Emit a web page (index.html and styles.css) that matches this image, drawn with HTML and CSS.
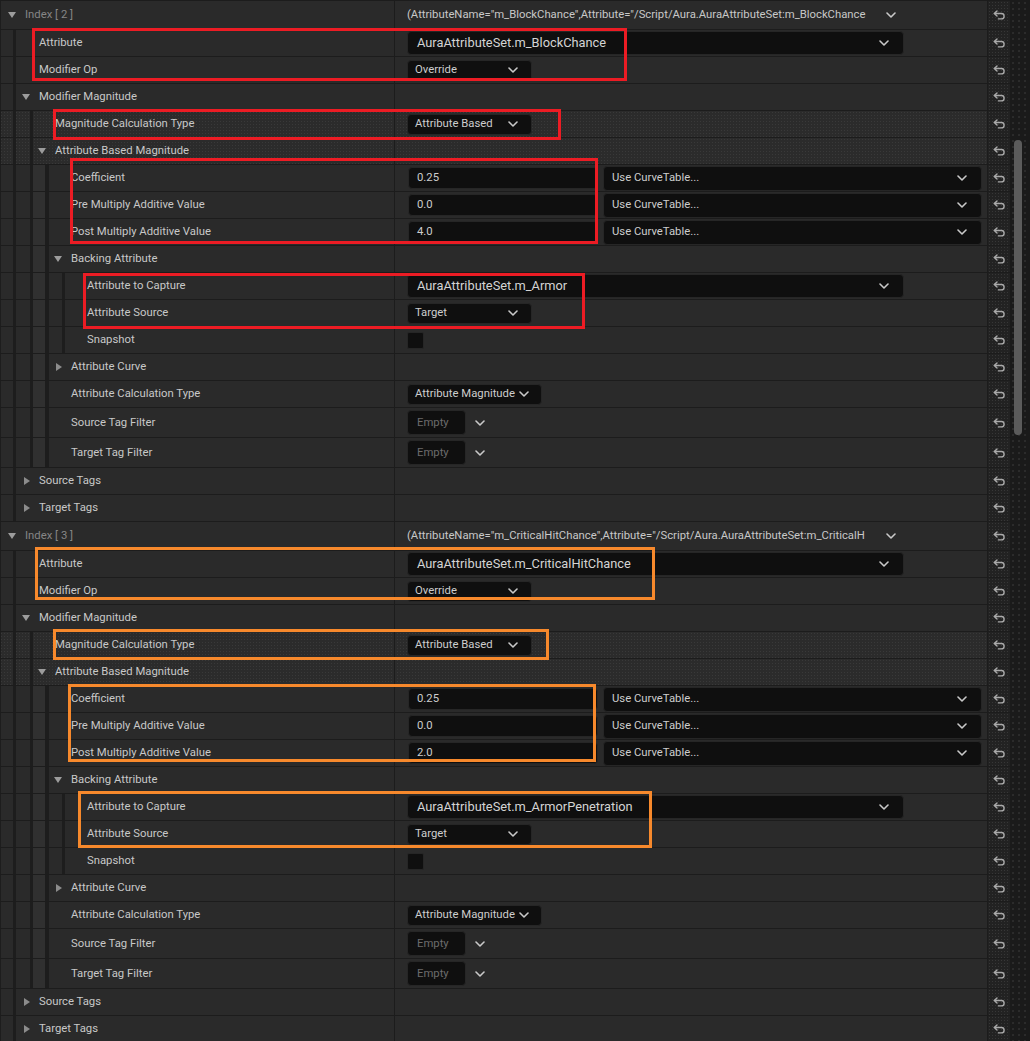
FILE: index.html
```html
<!DOCTYPE html>
<html lang="en">
<head>
<meta charset="utf-8">
<title>Details</title>
<link rel="stylesheet" href="styles.css">
</head>
<body>
<div class="page">
  <div class="list">

    <!-- ===== Index 2 ===== -->
    <div class="row idx">
      <div class="name d0 hdr"><span class="arw"><i class="tri-d"></i></span><span class="lbl dim">Index [ 2 ]</span></div>
      <div class="val"><span class="sum">(AttributeName="m_BlockChance",Attribute="/Script/Aura.AuraAttributeSet:m_BlockChance</span><svg class="chev" width="10" height="6" viewBox="0 0 10 6"><path d="M1 1L5 5L9 1"/></svg></div>
      <div class="rst"><svg width="13" height="10" viewBox="0 0 13 10"><path d="M4 .9L1.2 3.5L4 6.1M1.6 3.5H8.4A2.7 2.7 0 0 1 8.4 8.9H5.4"/></svg></div>
    </div>
    <div class="row">
      <div class="name d1"><span class="lbl">Attribute</span></div>
      <div class="val"><div class="box combo"><span>AuraAttributeSet.m_BlockChance</span><svg class="chev" width="10" height="6" viewBox="0 0 10 6"><path d="M1 1L5 5L9 1"/></svg></div></div>
      <div class="rst"><svg width="13" height="10" viewBox="0 0 13 10"><path d="M4 .9L1.2 3.5L4 6.1M1.6 3.5H8.4A2.7 2.7 0 0 1 8.4 8.9H5.4"/></svg></div>
    </div>
    <div class="row">
      <div class="name d1"><span class="lbl">Modifier Op</span></div>
      <div class="val"><div class="box dd"><span>Override</span><svg class="chev" width="10" height="6" viewBox="0 0 10 6"><path d="M1 1L5 5L9 1"/></svg></div></div>
      <div class="rst"><svg width="13" height="10" viewBox="0 0 13 10"><path d="M4 .9L1.2 3.5L4 6.1M1.6 3.5H8.4A2.7 2.7 0 0 1 8.4 8.9H5.4"/></svg></div>
    </div>
    <div class="row">
      <div class="name d1 hdr"><span class="arw"><i class="tri-d"></i></span><span class="lbl">Modifier Magnitude</span></div>
      <div class="val"></div>
      <div class="rst"><svg width="13" height="10" viewBox="0 0 13 10"><path d="M4 .9L1.2 3.5L4 6.1M1.6 3.5H8.4A2.7 2.7 0 0 1 8.4 8.9H5.4"/></svg></div>
    </div>
    <div class="row tex">
      <div class="name d2"><span class="lbl">Magnitude Calculation Type</span></div>
      <div class="val"><div class="box dd"><span>Attribute Based</span><svg class="chev" width="10" height="6" viewBox="0 0 10 6"><path d="M1 1L5 5L9 1"/></svg></div></div>
      <div class="rst"><svg width="13" height="10" viewBox="0 0 13 10"><path d="M4 .9L1.2 3.5L4 6.1M1.6 3.5H8.4A2.7 2.7 0 0 1 8.4 8.9H5.4"/></svg></div>
    </div>
    <div class="row tex">
      <div class="name d2 hdr"><span class="arw"><i class="tri-d"></i></span><span class="lbl">Attribute Based Magnitude</span></div>
      <div class="val"></div>
      <div class="rst"><svg width="13" height="10" viewBox="0 0 13 10"><path d="M4 .9L1.2 3.5L4 6.1M1.6 3.5H8.4A2.7 2.7 0 0 1 8.4 8.9H5.4"/></svg></div>
    </div>
    <div class="row">
      <div class="name d3"><span class="lbl">Coefficient</span></div>
      <div class="val"><div class="box num"><span>0.25</span></div><div class="box curve"><span>Use CurveTable...</span><svg class="chev" width="10" height="6" viewBox="0 0 10 6"><path d="M1 1L5 5L9 1"/></svg></div></div>
      <div class="rst"><svg width="13" height="10" viewBox="0 0 13 10"><path d="M4 .9L1.2 3.5L4 6.1M1.6 3.5H8.4A2.7 2.7 0 0 1 8.4 8.9H5.4"/></svg></div>
    </div>
    <div class="row">
      <div class="name d3"><span class="lbl">Pre Multiply Additive Value</span></div>
      <div class="val"><div class="box num"><span>0.0</span></div><div class="box curve"><span>Use CurveTable...</span><svg class="chev" width="10" height="6" viewBox="0 0 10 6"><path d="M1 1L5 5L9 1"/></svg></div></div>
      <div class="rst"><svg width="13" height="10" viewBox="0 0 13 10"><path d="M4 .9L1.2 3.5L4 6.1M1.6 3.5H8.4A2.7 2.7 0 0 1 8.4 8.9H5.4"/></svg></div>
    </div>
    <div class="row">
      <div class="name d3"><span class="lbl">Post Multiply Additive Value</span></div>
      <div class="val"><div class="box num"><span>4.0</span></div><div class="box curve"><span>Use CurveTable...</span><svg class="chev" width="10" height="6" viewBox="0 0 10 6"><path d="M1 1L5 5L9 1"/></svg></div></div>
      <div class="rst"><svg width="13" height="10" viewBox="0 0 13 10"><path d="M4 .9L1.2 3.5L4 6.1M1.6 3.5H8.4A2.7 2.7 0 0 1 8.4 8.9H5.4"/></svg></div>
    </div>
    <div class="row">
      <div class="name d3 hdr"><span class="arw"><i class="tri-d"></i></span><span class="lbl">Backing Attribute</span></div>
      <div class="val"></div>
      <div class="rst"><svg width="13" height="10" viewBox="0 0 13 10"><path d="M4 .9L1.2 3.5L4 6.1M1.6 3.5H8.4A2.7 2.7 0 0 1 8.4 8.9H5.4"/></svg></div>
    </div>
    <div class="row">
      <div class="name d4"><span class="lbl">Attribute to Capture</span></div>
      <div class="val"><div class="box combo"><span>AuraAttributeSet.m_Armor</span><svg class="chev" width="10" height="6" viewBox="0 0 10 6"><path d="M1 1L5 5L9 1"/></svg></div></div>
      <div class="rst"><svg width="13" height="10" viewBox="0 0 13 10"><path d="M4 .9L1.2 3.5L4 6.1M1.6 3.5H8.4A2.7 2.7 0 0 1 8.4 8.9H5.4"/></svg></div>
    </div>
    <div class="row">
      <div class="name d4"><span class="lbl">Attribute Source</span></div>
      <div class="val"><div class="box dd"><span>Target</span><svg class="chev" width="10" height="6" viewBox="0 0 10 6"><path d="M1 1L5 5L9 1"/></svg></div></div>
      <div class="rst"><svg width="13" height="10" viewBox="0 0 13 10"><path d="M4 .9L1.2 3.5L4 6.1M1.6 3.5H8.4A2.7 2.7 0 0 1 8.4 8.9H5.4"/></svg></div>
    </div>
    <div class="row">
      <div class="name d4"><span class="lbl">Snapshot</span></div>
      <div class="val"><div class="check"></div></div>
      <div class="rst"><svg width="13" height="10" viewBox="0 0 13 10"><path d="M4 .9L1.2 3.5L4 6.1M1.6 3.5H8.4A2.7 2.7 0 0 1 8.4 8.9H5.4"/></svg></div>
    </div>
    <div class="row">
      <div class="name d3 hdr"><span class="arw"><i class="tri-r"></i></span><span class="lbl">Attribute Curve</span></div>
      <div class="val"></div>
      <div class="rst"><svg width="13" height="10" viewBox="0 0 13 10"><path d="M4 .9L1.2 3.5L4 6.1M1.6 3.5H8.4A2.7 2.7 0 0 1 8.4 8.9H5.4"/></svg></div>
    </div>
    <div class="row">
      <div class="name d3"><span class="lbl">Attribute Calculation Type</span></div>
      <div class="val"><div class="box dd mag"><span>Attribute Magnitude</span><svg class="chev" width="10" height="6" viewBox="0 0 10 6"><path d="M1 1L5 5L9 1"/></svg></div></div>
      <div class="rst"><svg width="13" height="10" viewBox="0 0 13 10"><path d="M4 .9L1.2 3.5L4 6.1M1.6 3.5H8.4A2.7 2.7 0 0 1 8.4 8.9H5.4"/></svg></div>
    </div>
    <div class="row tall">
      <div class="name d3"><span class="lbl">Source Tag Filter</span></div>
      <div class="val"><div class="box empty"><span>Empty</span></div><svg class="chev ext" width="10" height="6" viewBox="0 0 10 6"><path d="M1 1L5 5L9 1"/></svg></div>
      <div class="rst"><svg width="13" height="10" viewBox="0 0 13 10"><path d="M4 .9L1.2 3.5L4 6.1M1.6 3.5H8.4A2.7 2.7 0 0 1 8.4 8.9H5.4"/></svg></div>
    </div>
    <div class="row tall">
      <div class="name d3"><span class="lbl">Target Tag Filter</span></div>
      <div class="val"><div class="box empty"><span>Empty</span></div><svg class="chev ext" width="10" height="6" viewBox="0 0 10 6"><path d="M1 1L5 5L9 1"/></svg></div>
      <div class="rst"><svg width="13" height="10" viewBox="0 0 13 10"><path d="M4 .9L1.2 3.5L4 6.1M1.6 3.5H8.4A2.7 2.7 0 0 1 8.4 8.9H5.4"/></svg></div>
    </div>
    <div class="row">
      <div class="name d1 hdr"><span class="arw"><i class="tri-r"></i></span><span class="lbl">Source Tags</span></div>
      <div class="val"></div>
      <div class="rst"><svg width="13" height="10" viewBox="0 0 13 10"><path d="M4 .9L1.2 3.5L4 6.1M1.6 3.5H8.4A2.7 2.7 0 0 1 8.4 8.9H5.4"/></svg></div>
    </div>
    <div class="row">
      <div class="name d1 hdr"><span class="arw"><i class="tri-r"></i></span><span class="lbl">Target Tags</span></div>
      <div class="val"></div>
      <div class="rst"><svg width="13" height="10" viewBox="0 0 13 10"><path d="M4 .9L1.2 3.5L4 6.1M1.6 3.5H8.4A2.7 2.7 0 0 1 8.4 8.9H5.4"/></svg></div>
    </div>

    <!-- ===== Index 3 ===== -->
    <div class="row idx">
      <div class="name d0 hdr"><span class="arw"><i class="tri-d"></i></span><span class="lbl dim">Index [ 3 ]</span></div>
      <div class="val"><span class="sum">(AttributeName="m_CriticalHitChance",Attribute="/Script/Aura.AuraAttributeSet:m_CriticalH</span><svg class="chev" width="10" height="6" viewBox="0 0 10 6"><path d="M1 1L5 5L9 1"/></svg></div>
      <div class="rst"><svg width="13" height="10" viewBox="0 0 13 10"><path d="M4 .9L1.2 3.5L4 6.1M1.6 3.5H8.4A2.7 2.7 0 0 1 8.4 8.9H5.4"/></svg></div>
    </div>
    <div class="row">
      <div class="name d1"><span class="lbl">Attribute</span></div>
      <div class="val"><div class="box combo"><span>AuraAttributeSet.m_CriticalHitChance</span><svg class="chev" width="10" height="6" viewBox="0 0 10 6"><path d="M1 1L5 5L9 1"/></svg></div></div>
      <div class="rst"><svg width="13" height="10" viewBox="0 0 13 10"><path d="M4 .9L1.2 3.5L4 6.1M1.6 3.5H8.4A2.7 2.7 0 0 1 8.4 8.9H5.4"/></svg></div>
    </div>
    <div class="row">
      <div class="name d1"><span class="lbl">Modifier Op</span></div>
      <div class="val"><div class="box dd"><span>Override</span><svg class="chev" width="10" height="6" viewBox="0 0 10 6"><path d="M1 1L5 5L9 1"/></svg></div></div>
      <div class="rst"><svg width="13" height="10" viewBox="0 0 13 10"><path d="M4 .9L1.2 3.5L4 6.1M1.6 3.5H8.4A2.7 2.7 0 0 1 8.4 8.9H5.4"/></svg></div>
    </div>
    <div class="row">
      <div class="name d1 hdr"><span class="arw"><i class="tri-d"></i></span><span class="lbl">Modifier Magnitude</span></div>
      <div class="val"></div>
      <div class="rst"><svg width="13" height="10" viewBox="0 0 13 10"><path d="M4 .9L1.2 3.5L4 6.1M1.6 3.5H8.4A2.7 2.7 0 0 1 8.4 8.9H5.4"/></svg></div>
    </div>
    <div class="row tex">
      <div class="name d2"><span class="lbl">Magnitude Calculation Type</span></div>
      <div class="val"><div class="box dd"><span>Attribute Based</span><svg class="chev" width="10" height="6" viewBox="0 0 10 6"><path d="M1 1L5 5L9 1"/></svg></div></div>
      <div class="rst"><svg width="13" height="10" viewBox="0 0 13 10"><path d="M4 .9L1.2 3.5L4 6.1M1.6 3.5H8.4A2.7 2.7 0 0 1 8.4 8.9H5.4"/></svg></div>
    </div>
    <div class="row tex">
      <div class="name d2 hdr"><span class="arw"><i class="tri-d"></i></span><span class="lbl">Attribute Based Magnitude</span></div>
      <div class="val"></div>
      <div class="rst"><svg width="13" height="10" viewBox="0 0 13 10"><path d="M4 .9L1.2 3.5L4 6.1M1.6 3.5H8.4A2.7 2.7 0 0 1 8.4 8.9H5.4"/></svg></div>
    </div>
    <div class="row">
      <div class="name d3"><span class="lbl">Coefficient</span></div>
      <div class="val"><div class="box num"><span>0.25</span></div><div class="box curve"><span>Use CurveTable...</span><svg class="chev" width="10" height="6" viewBox="0 0 10 6"><path d="M1 1L5 5L9 1"/></svg></div></div>
      <div class="rst"><svg width="13" height="10" viewBox="0 0 13 10"><path d="M4 .9L1.2 3.5L4 6.1M1.6 3.5H8.4A2.7 2.7 0 0 1 8.4 8.9H5.4"/></svg></div>
    </div>
    <div class="row">
      <div class="name d3"><span class="lbl">Pre Multiply Additive Value</span></div>
      <div class="val"><div class="box num"><span>0.0</span></div><div class="box curve"><span>Use CurveTable...</span><svg class="chev" width="10" height="6" viewBox="0 0 10 6"><path d="M1 1L5 5L9 1"/></svg></div></div>
      <div class="rst"><svg width="13" height="10" viewBox="0 0 13 10"><path d="M4 .9L1.2 3.5L4 6.1M1.6 3.5H8.4A2.7 2.7 0 0 1 8.4 8.9H5.4"/></svg></div>
    </div>
    <div class="row">
      <div class="name d3"><span class="lbl">Post Multiply Additive Value</span></div>
      <div class="val"><div class="box num"><span>2.0</span></div><div class="box curve"><span>Use CurveTable...</span><svg class="chev" width="10" height="6" viewBox="0 0 10 6"><path d="M1 1L5 5L9 1"/></svg></div></div>
      <div class="rst"><svg width="13" height="10" viewBox="0 0 13 10"><path d="M4 .9L1.2 3.5L4 6.1M1.6 3.5H8.4A2.7 2.7 0 0 1 8.4 8.9H5.4"/></svg></div>
    </div>
    <div class="row">
      <div class="name d3 hdr"><span class="arw"><i class="tri-d"></i></span><span class="lbl">Backing Attribute</span></div>
      <div class="val"></div>
      <div class="rst"><svg width="13" height="10" viewBox="0 0 13 10"><path d="M4 .9L1.2 3.5L4 6.1M1.6 3.5H8.4A2.7 2.7 0 0 1 8.4 8.9H5.4"/></svg></div>
    </div>
    <div class="row">
      <div class="name d4"><span class="lbl">Attribute to Capture</span></div>
      <div class="val"><div class="box combo"><span>AuraAttributeSet.m_ArmorPenetration</span><svg class="chev" width="10" height="6" viewBox="0 0 10 6"><path d="M1 1L5 5L9 1"/></svg></div></div>
      <div class="rst"><svg width="13" height="10" viewBox="0 0 13 10"><path d="M4 .9L1.2 3.5L4 6.1M1.6 3.5H8.4A2.7 2.7 0 0 1 8.4 8.9H5.4"/></svg></div>
    </div>
    <div class="row">
      <div class="name d4"><span class="lbl">Attribute Source</span></div>
      <div class="val"><div class="box dd"><span>Target</span><svg class="chev" width="10" height="6" viewBox="0 0 10 6"><path d="M1 1L5 5L9 1"/></svg></div></div>
      <div class="rst"><svg width="13" height="10" viewBox="0 0 13 10"><path d="M4 .9L1.2 3.5L4 6.1M1.6 3.5H8.4A2.7 2.7 0 0 1 8.4 8.9H5.4"/></svg></div>
    </div>
    <div class="row">
      <div class="name d4"><span class="lbl">Snapshot</span></div>
      <div class="val"><div class="check"></div></div>
      <div class="rst"><svg width="13" height="10" viewBox="0 0 13 10"><path d="M4 .9L1.2 3.5L4 6.1M1.6 3.5H8.4A2.7 2.7 0 0 1 8.4 8.9H5.4"/></svg></div>
    </div>
    <div class="row">
      <div class="name d3 hdr"><span class="arw"><i class="tri-r"></i></span><span class="lbl">Attribute Curve</span></div>
      <div class="val"></div>
      <div class="rst"><svg width="13" height="10" viewBox="0 0 13 10"><path d="M4 .9L1.2 3.5L4 6.1M1.6 3.5H8.4A2.7 2.7 0 0 1 8.4 8.9H5.4"/></svg></div>
    </div>
    <div class="row">
      <div class="name d3"><span class="lbl">Attribute Calculation Type</span></div>
      <div class="val"><div class="box dd mag"><span>Attribute Magnitude</span><svg class="chev" width="10" height="6" viewBox="0 0 10 6"><path d="M1 1L5 5L9 1"/></svg></div></div>
      <div class="rst"><svg width="13" height="10" viewBox="0 0 13 10"><path d="M4 .9L1.2 3.5L4 6.1M1.6 3.5H8.4A2.7 2.7 0 0 1 8.4 8.9H5.4"/></svg></div>
    </div>
    <div class="row tall">
      <div class="name d3"><span class="lbl">Source Tag Filter</span></div>
      <div class="val"><div class="box empty"><span>Empty</span></div><svg class="chev ext" width="10" height="6" viewBox="0 0 10 6"><path d="M1 1L5 5L9 1"/></svg></div>
      <div class="rst"><svg width="13" height="10" viewBox="0 0 13 10"><path d="M4 .9L1.2 3.5L4 6.1M1.6 3.5H8.4A2.7 2.7 0 0 1 8.4 8.9H5.4"/></svg></div>
    </div>
    <div class="row tall">
      <div class="name d3"><span class="lbl">Target Tag Filter</span></div>
      <div class="val"><div class="box empty"><span>Empty</span></div><svg class="chev ext" width="10" height="6" viewBox="0 0 10 6"><path d="M1 1L5 5L9 1"/></svg></div>
      <div class="rst"><svg width="13" height="10" viewBox="0 0 13 10"><path d="M4 .9L1.2 3.5L4 6.1M1.6 3.5H8.4A2.7 2.7 0 0 1 8.4 8.9H5.4"/></svg></div>
    </div>
    <div class="row">
      <div class="name d1 hdr"><span class="arw"><i class="tri-r"></i></span><span class="lbl">Source Tags</span></div>
      <div class="val"></div>
      <div class="rst"><svg width="13" height="10" viewBox="0 0 13 10"><path d="M4 .9L1.2 3.5L4 6.1M1.6 3.5H8.4A2.7 2.7 0 0 1 8.4 8.9H5.4"/></svg></div>
    </div>
    <div class="row">
      <div class="name d1 hdr"><span class="arw"><i class="tri-r"></i></span><span class="lbl">Target Tags</span></div>
      <div class="val"></div>
      <div class="rst"><svg width="13" height="10" viewBox="0 0 13 10"><path d="M4 .9L1.2 3.5L4 6.1M1.6 3.5H8.4A2.7 2.7 0 0 1 8.4 8.9H5.4"/></svg></div>
    </div>
  </div>

  <div class="scroll"><div class="thumb"></div></div>

  <!-- annotation overlays -->
  <div class="mark red r1"></div>
  <div class="mark red r2"></div>
  <div class="mark red r3"></div>
  <div class="mark red r4"></div>
  <div class="mark orange o1"></div>
  <div class="mark orange o2"></div>
  <div class="mark orange o3"></div>
  <div class="mark orange o4"></div>
</div>
</body>
</html>
```

FILE: styles.css
```css
* { box-sizing: border-box; }

html, body {
  margin: 0;
  padding: 0;
  height: 100%;
  overflow: hidden;
  background: #1b1b1b;
}

body {
  font-family: Roboto, "Noto Sans", "Liberation Sans", sans-serif;
  font-size: 11.3px;
  color: #c6c6c6;
}

.page {
  position: relative;
  display: flex;
  width: 1030px;
  height: 1041px;
}

.list {
  width: 1010px;
  flex: none;
  border-top: 1px solid #1c1c1c;
}

.row {
  display: flex;
  height: 27px;
  border-bottom: 1px solid #1c1c1c;
  background: #2a2a2a;
}
.row.idx { height: 29px; }
.row.tall { height: 30px; }
.row.tex {
  background-color: #2b2b2b;
  background-image: radial-gradient(rgba(70,70,70,0.55) 0.6px, transparent 0.9px);
  background-size: 3px 3px;
}

/* name column */
.name {
  width: 394px;
  flex: none;
  display: flex;
  align-items: center;
  white-space: nowrap;
  padding-bottom: 1px;
  --g: #1d1d1d;
  --b: #303030;
}
.name.d0 { padding-left: 8px; }
.name.d1 { padding-left: 39px; }
.name.d2 { padding-left: 55px; }
.name.d3 { padding-left: 71px; }
.name.d4 { padding-left: 87px; }
.name.d1.hdr { padding-left: 22px; }
.name.d2.hdr { padding-left: 38px; }
.name.d3.hdr { padding-left: 54px; }

.name.d1 {
  background-image: linear-gradient(90deg, var(--g) 0 1px, transparent 1px 13px, var(--g) 13px 16px, transparent 16px);
}
.name.d2 {
  background-image: linear-gradient(90deg, var(--g) 0 1px, transparent 1px 13px, var(--g) 13px 16px, transparent 16px 30px, var(--g) 30px 33px, transparent 33px);
}
.name.d3 {
  background-image: linear-gradient(90deg, var(--g) 0 1px, transparent 1px 13px, var(--g) 13px 16px, transparent 16px 30px, var(--g) 30px 33px, var(--b) 33px 45px, var(--g) 45px 49px, transparent 49px);
}
.name.d4 {
  background-image: linear-gradient(90deg, var(--g) 0 1px, transparent 1px 13px, var(--g) 13px 16px, transparent 16px 30px, var(--g) 30px 33px, var(--b) 33px 45px, var(--g) 45px 49px, transparent 49px 62px, var(--g) 62px 65px, transparent 65px);
}
.name.d0 {
  background-image: linear-gradient(90deg, var(--g) 0 1px, transparent 1px);
}

.arw {
  width: 17px;
  flex: none;
  display: flex;
  align-items: center;
  padding-top: 1px;
}
.tri-d {
  display: block;
  width: 0;
  height: 0;
  border-left: 4.5px solid transparent;
  border-right: 4.5px solid transparent;
  border-top: 6px solid #9c9c9c;
}
.tri-r {
  display: block;
  width: 0;
  height: 0;
  margin-left: 2px;
  border-top: 4.5px solid transparent;
  border-bottom: 4.5px solid transparent;
  border-left: 6px solid #8c8c8c;
}

.lbl { color: #c8c8c8; }
.lbl.dim { color: #868686; }

/* value column */
.val {
  flex: 1;
  min-width: 0;
  display: flex;
  align-items: center;
  gap: 5px;
  padding-left: 12px;
  border-left: 1px solid #1c1c1c;
}

.sum {
  width: 474px;
  flex: none;
  white-space: nowrap;
  color: #c8c8c8;
  padding-bottom: 1px;
}
.row.idx .chev { margin-left: 0; }

.chev { flex: none; }
.chev path {
  fill: none;
  stroke: #c9c9c9;
  stroke-width: 1.6;
  stroke-linecap: round;
  stroke-linejoin: round;
}
.chev.ext { margin-left: 4px; }

.box {
  display: flex;
  align-items: center;
  justify-content: space-between;
  background: #0f0f0f;
  border: 1px solid #262626;
  border-radius: 4px;
  color: #cdcdcd;
  white-space: nowrap;
  flex: none;
}
.box span { padding-bottom: 1px; }
.combo {
  width: 497px;
  height: 24px;
  padding: 0 14px 0 9px;
  font-size: 12.8px;
  color: #d4d4d4;
}
.dd {
  width: 125px;
  height: 21px;
  padding: 0 13px 0 7px;
}
.dd.mag {
  width: 135px;
  padding: 0 12px 0 7px;
}
.num {
  width: 190px;
  height: 22px;
  padding: 0 8px;
  margin-left: 1px;
}
.curve {
  width: 379px;
  height: 25px;
  padding: 0 14px 0 8px;
}
.empty {
  width: 59px;
  height: 25px;
  padding: 0 9px;
  color: #6c6c6c;
}

.check {
  width: 17px;
  height: 17px;
  background: #0f0f0f;
  border: 1px solid #262626;
  border-radius: 2px;
}

/* reset column */
.rst {
  width: 23px;
  flex: none;
  display: flex;
  align-items: center;
  justify-content: center;
  border-left: 1px solid #1c1c1c;
  background-color: #222222;
  background-image: radial-gradient(rgba(60,60,60,0.8) 0.6px, transparent 0.9px);
  background-size: 3px 3px;
}
.rst svg path {
  fill: none;
  stroke: #a9a9a9;
  stroke-width: 1.4;
  stroke-linecap: round;
  stroke-linejoin: round;
}

/* scrollbar */
.scroll {
  width: 20px;
  flex: none;
  background-color: #1a1a1a;
  background-image: radial-gradient(rgba(55,55,55,0.9) 0.6px, transparent 0.9px);
  background-size: 6px 6px;
  padding: 140px 0 0 4px;
}
.thumb {
  width: 8px;
  height: 295px;
  border-radius: 4px;
  background: #5b5b5b;
}

/* annotation rectangles */
.mark {
  position: absolute;
  border: 3px solid;
  pointer-events: none;
}
.red { border-color: #ec1c24; }
.orange { border-color: #f7892c; }
.r1 { left: 32px; top: 28px; width: 595px; height: 53px; }
.r2 { left: 53px; top: 109px; width: 508px; height: 31px; }
.r3 { left: 70px; top: 158px; width: 528px; height: 86px; }
.r4 { left: 83px; top: 273px; width: 502px; height: 56px; }
.o1 { left: 35px; top: 547px; width: 620px; height: 53px; }
.o2 { left: 53px; top: 629px; width: 496px; height: 31px; }
.o3 { left: 68px; top: 684px; width: 528px; height: 78px; }
.o4 { left: 78px; top: 791px; width: 574px; height: 57px; }
```
